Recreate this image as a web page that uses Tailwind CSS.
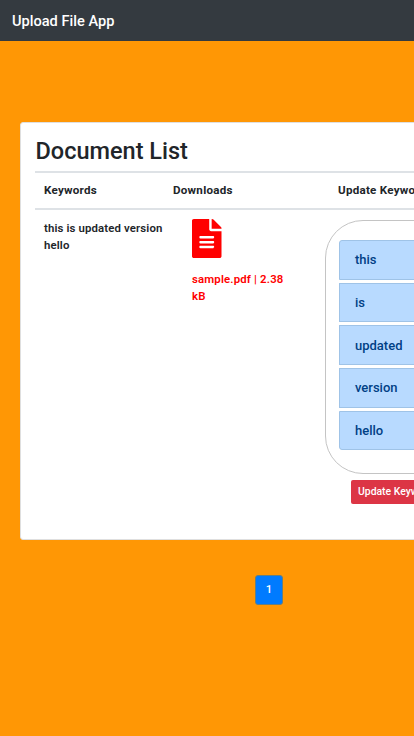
<!DOCTYPE html>
<html lang="en">
<head>
<meta charset="utf-8">
<title>Upload File App</title>
<script src="https://cdn.jsdelivr.net/npm/@tailwindcss/browser@4"></script>
</head>
<body class="h-[736px] overflow-hidden bg-[#ff9705] font-[Roboto,sans-serif] text-[#212529]">
<nav class="flex h-[41px] items-center bg-[#343a40] pl-3 text-[14.600px] leading-5 font-medium text-white"><span>Upload File App</span></nav>
<main class="w-[540px]">
  <section class="mt-[81px] ml-5 h-[418px] w-[500px] rounded-[3px] border border-[#dfdfdf] bg-white px-[14px] pt-[14px]">
    <h1 class="h-[34px] pl-[0.5px] text-[23.500px] leading-[29px] font-medium">Document List</h1>
    <table class="w-full table-fixed border-collapse text-left text-[11.4px] leading-[17px]">
      <colgroup><col class="w-[129px]"><col class="w-[152px]"><col></colgroup>
      <thead>
        <tr class="h-[37px] border-y-2 border-[#dee2e6] text-[11.6px] tracking-[0.26px]">
          <th class="py-0 pl-[9px] font-bold">Keywords</th>
          <th class="py-0 pl-[9px] font-bold">Downloads</th>
          <th class="py-0 pl-[22px] font-bold">Update Keywords</th>
        </tr>
      </thead>
      <tbody>
        <tr class="align-top">
          <td class="pt-[10px] pl-[9px] font-semibold"><div class="w-[125px] tracking-[0.13px]">this is updated version hello</div></td>
          <td class="pt-[9px] pl-[28px] font-semibold text-[#ff0000]">
            <svg class="block h-[39px] w-[29.500px]" viewBox="0 0 384 512" preserveAspectRatio="none" fill="currentColor"><path d="M224 136V0H24C10.700 0 0 10.700 0 24v464c0 13.300 10.700 24 24 24h336c13.300 0 24-10.700 24-24V160H248c-13.200 0-24-10.800-24-24zm64 236c0 6.600-5.400 12-12 12H108c-6.600 0-12-5.400-12-12v-8c0-6.600 5.400-12 12-12h168c6.600 0 12 5.400 12 12v8zm0-64c0 6.600-5.400 12-12 12H108c-6.600 0-12-5.400-12-12v-8c0-6.600 5.400-12 12-12h168c6.600 0 12 5.400 12 12v8zm0-72v8c0 6.600-5.400 12-12 12H108c-6.600 0-12-5.400-12-12v-8c0-6.600 5.400-12 12-12h168c6.600 0 12 5.400 12 12zm96-114.100v6.100H256V0h6.100c6.400 0 12.500 2.500 17 7l97.900 98c4.500 4.500 7 10.600 7 16.900z"/></svg>
            <div class="mt-[13px] w-[98px] tracking-[0.16px]">sample.pdf | 2.38 kB</div>
          </td>
          <td class="pt-[9.500px] pl-[9px]">
            <div class="h-[254px] w-[180px] rounded-[38px] border border-[#c4c4c4] px-[13px] pt-[19.700px]">
              <ul class="flex flex-col gap-[3px] text-[13px] leading-[19px] font-medium text-[#004085]">
                <li class="flex h-[39.6px] items-center rounded-t-[3px] border border-[#9fc3e7] bg-[#b8daff] pl-[15px]">this</li>
                <li class="flex h-[39.6px] items-center border border-[#9fc3e7] bg-[#b8daff] pl-[15px]">is</li>
                <li class="flex h-[39.6px] items-center border border-[#9fc3e7] bg-[#b8daff] pl-[15px]">updated</li>
                <li class="flex h-[39.6px] items-center border border-[#9fc3e7] bg-[#b8daff] pl-[15px]">version</li>
                <li class="flex h-[39.6px] items-center rounded-b-[3px] border border-[#9fc3e7] bg-[#b8daff] pl-[15px]">hello</li>
              </ul>
            </div>
            <button class="mt-[6px] ml-[26px] block h-6 w-[110px] rounded-[2px] bg-[#dc3545] pl-[7px] text-left text-[10.400px] leading-6 font-medium text-white">Update Keywords</button>
          </td>
        </tr>
      </tbody>
    </table>
  </section>
  <div class="mt-[34.500px] flex pl-[255px]"><a class="flex h-[30px] w-7 items-center justify-center rounded-[3px] border border-[#627f82] bg-[#007bff] text-[11.400px] font-medium text-white">1</a></div>
</main>
</body>
</html>
